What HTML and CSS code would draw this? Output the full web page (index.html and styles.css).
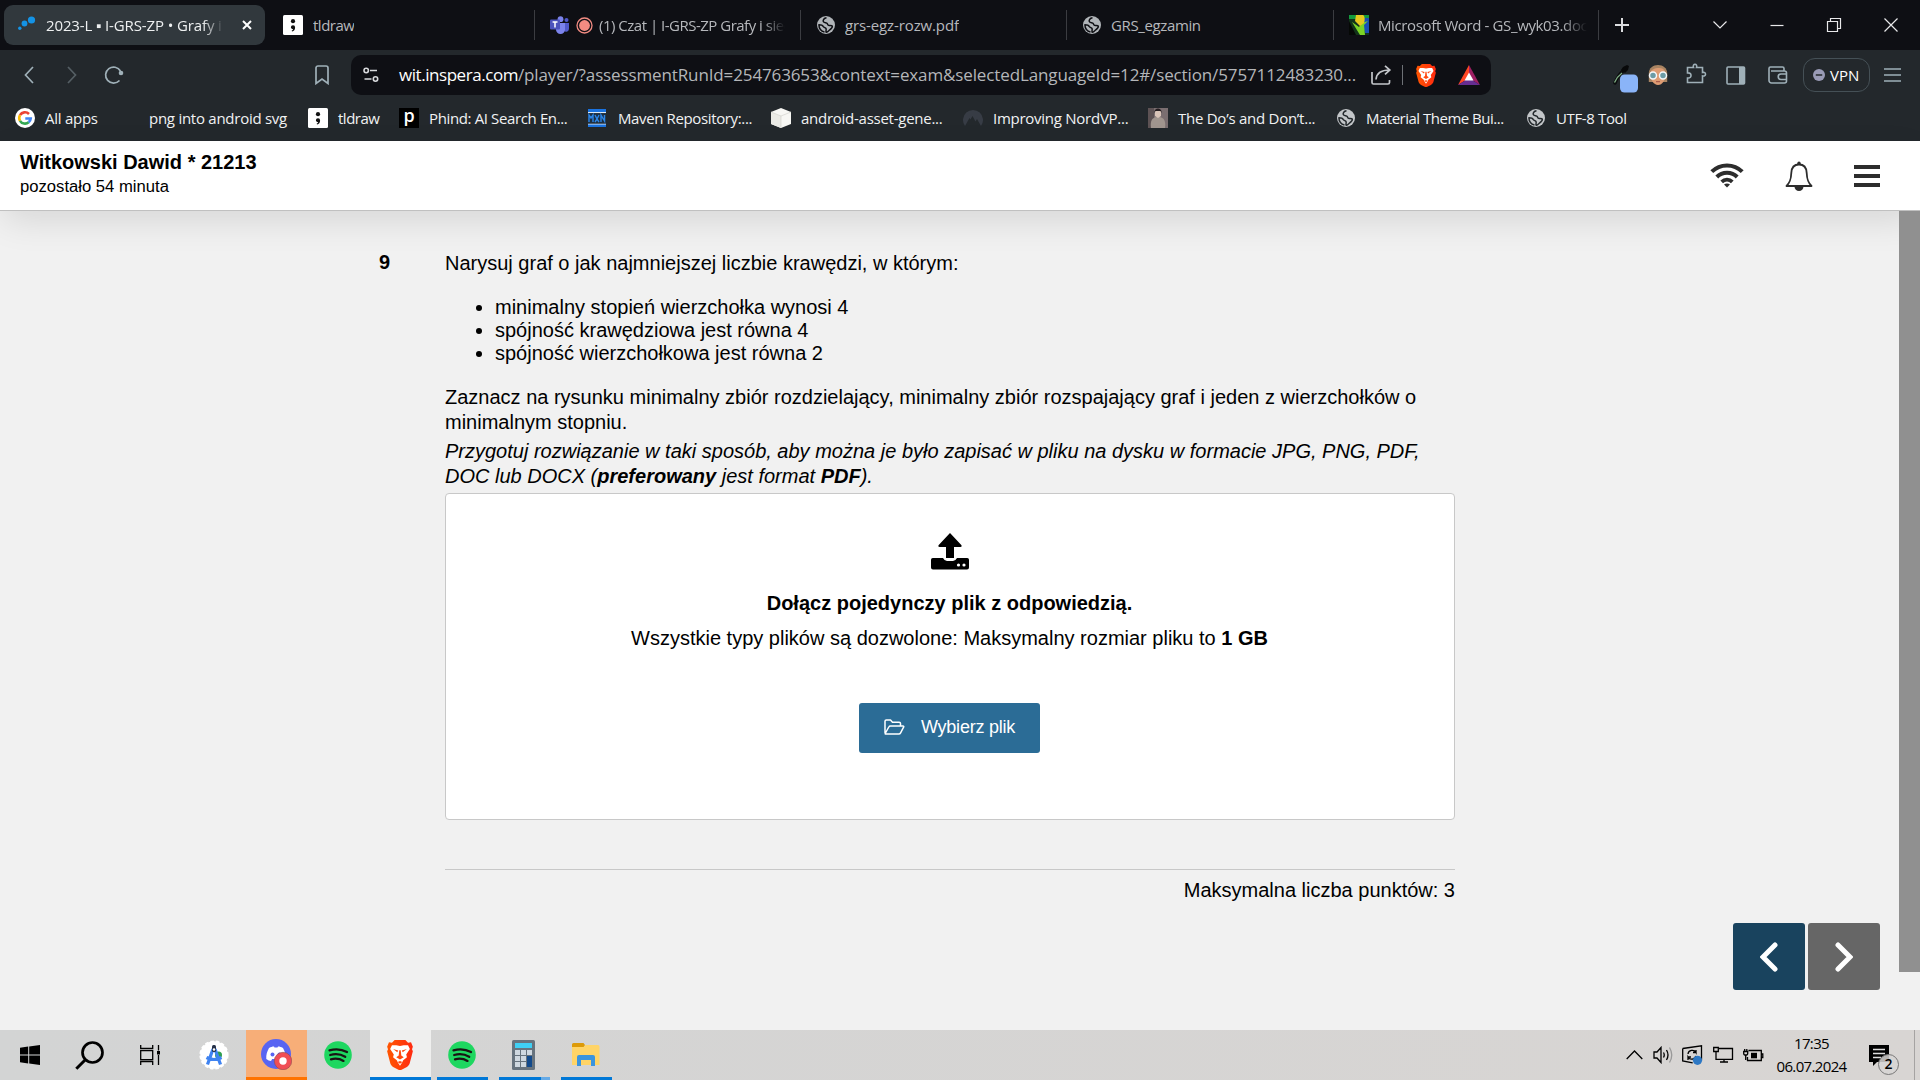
FILE: index.html
```html
<!DOCTYPE html>
<html lang="pl">
<head>
<meta charset="utf-8">
<title>2023-L ▪ I-GRS-ZP • Grafy i sieci</title>
<link rel="stylesheet" href="styles.css">
</head>
<body>
<svg class="defs" width="0" height="0">
  <symbol id="globe" viewBox="0 0 18 18"><circle cx="9" cy="9" r="9" fill="currentColor"/><path d="M9.500 1.800C7 2.200 5.800 4 6.300 5.600c.5 1.400 2.200 1 3.400 1.500 1.100.5.700 1.900 1.900 2.300 1.300.4 3.200-.2 3.700.8.400 1.200-1.300 2.600-2.700 3.800-1.200 1-1.900 2-3.400 2.300-.8-1 .5-2.700-.2-3.800-.6-1-2.200-.9-2.800-2.100C5.700 9.300 4 8.700 1.900 8.700c.1 3.700 2.500 6.500 5.600 7.300" fill="none" stroke="var(--cut)" stroke-width="1.500" stroke-linejoin="round"/></symbol>
  <symbol id="semi" viewBox="0 0 20 20"><rect width="20" height="20" rx="1.500" fill="#fff"/><circle cx="10" cy="6.200" r="2.100" fill="#111"/><path d="M7.900 12.300a2.100 2.100 0 1 1 4.200.1c0 2.200-1.200 3.600-3 4.200l-.5-.9c.9-.4 1.400-.9 1.500-1.600-1.300 0-2.200-.8-2.200-1.800z" fill="#111"/></symbol>
  <symbol id="lion" viewBox="0 0 24 28"><path d="M7 0h10l2.500 2.500 2.800-.3 1.700 4-.8 2.500.8 1.800-3 11.500c-.4 1.500-1.500 2.500-3 3.500l-6 3-6-3c-1.500-1-2.600-2-3-3.500L0 10.500l.8-1.800L0 6.200l1.700-4 2.800.3z" fill="url(#lionfill)"/><path d="M12 5.500 8.500 4.800 4.500 5 2.800 8.500l3.400 5-.7 2.500 3.500 3 1 2L12 24l2-3 1-2 3.500-3-.7-2.500 3.400-5L19.500 5l-4-.2z" fill="#fff"/><path d="m5.500 8.500 4.800 1.200-.8 1.800zM18.500 8.500 13.700 9.700l.8 1.800zM11.300 9.500h1.400l.5 5L15.500 16 12 18.300 8.500 16l2.300-1.500zM9.800 20.500l2.200-.8 2.200.8-2.200 1.600z" fill="#ff4a12"/></symbol>
  <linearGradient id="lionfill"><stop offset="0" stop-color="#ff5601"/><stop offset="1" stop-color="#ff2a10"/></linearGradient>
  <symbol id="spotify" viewBox="0 0 28 28"><circle cx="14" cy="14" r="13.800" fill="#1ed760"/><path d="M5.500 9.300c6-1.600 12.500-1 17.500 1.700M6.200 14c5-1.400 10.700-.8 15 1.800M7 18.300c4.300-1.100 8.800-.6 12.500 1.600" fill="none" stroke="#191414" stroke-linecap="round" stroke-width="2.300"/></symbol>
</svg>

<div class="tabstrip">
  <div class="tab active">
    <svg class="ic" width="18" height="18" viewBox="0 0 18 18" fill="#1493e6"><circle cx="1.800" cy="12.300" r="1.700"/><circle cx="6.500" cy="7.500" r="2.900"/><circle cx="13.500" cy="4" r="3.600"/></svg>
    <span class="t fade ls1">2023-L ▪ I-GRS-ZP • Grafy i sieci</span>
    <svg class="x" width="10" height="10" viewBox="0 0 10 10"><path d="m1 1 8 8M9 1 1 9" stroke="#fff" stroke-width="2"/></svg>
  </div>
  <div class="tab"><svg class="ic" width="20" height="20"><use href="#semi"/></svg><span class="t ls5">tldraw</span></div>
  <div class="tab">
    <svg class="ic" width="20" height="18" viewBox="0 0 20 18"><circle cx="10.500" cy="3.200" r="2.900" fill="#7b83eb"/><circle cx="16.500" cy="4" r="2" fill="#5059c9"/><path d="M13 7h6v5.500a3 3 0 0 1-5 2.500z" fill="#5059c9"/><path d="M6 7h9v6.500a4.500 4.500 0 0 1-9 0z" fill="#7b83eb"/><rect y="3.500" width="10" height="10" rx="1" fill="#4b53bc"/><path d="M2.600 6h4.900M5 6v5.500" stroke="#fff" stroke-width="1.500"/></svg>
    <svg class="rec" width="17" height="17" viewBox="0 0 17 17"><circle cx="8.500" cy="8.500" r="7.500" fill="none" stroke="#f28b82" stroke-width="1.300"/><circle cx="8.500" cy="8.500" r="5.400" fill="#f28b82"/></svg>
    <span class="t fade ls5">(1) Czat | I-GRS-ZP Grafy i sieci</span>
  </div>
  <div class="tab"><svg class="ic g" width="18" height="18"><use href="#globe"/></svg><span class="t ls1">grs-egz-rozw.pdf</span></div>
  <div class="tab"><svg class="ic g" width="18" height="18"><use href="#globe"/></svg><span class="t ls3">GRS_egzamin</span></div>
  <div class="tab">
    <svg class="ic" width="20" height="20" viewBox="0 0 20 20"><rect width="20" height="20" fill="#12331a"/><path d="M0 0h20v4H0z" fill="#149a3d"/><path d="M12 3h8v15h-4z" fill="#1a4fb5"/><path d="M0 6v14h7z" fill="#050805"/><path d="m3 7 8 13h5L15 10l4-4-6 2-3 4z" fill="#7bd326"/><path d="M7 0h7c2 1 2 5 1 8l-4 3-5-5z" fill="#e8c81e"/></svg>
    <span class="t fade ls3">Microsoft Word - GS_wyk03.docx</span>
  </div>
  <svg class="plus" width="14" height="14" viewBox="0 0 14 14"><path d="M7 0v14M0 7h14" stroke="#dcdde0" stroke-width="2"/></svg>
  <div class="wincontrols">
    <svg width="16" height="16" viewBox="0 0 16 16"><path d="m1.500 4.500 6.500 6.500 6.500-6.500"/></svg>
    <svg width="16" height="16" viewBox="0 0 16 16"><path d="M1.500 8.500h13"/></svg>
    <svg width="16" height="16" viewBox="0 0 16 16"><path d="M1.500 4.500h10v10h-10zM4.500 4V1.500h10v10H12"/></svg>
    <svg width="16" height="16" viewBox="0 0 16 16"><path d="m1.500 1.500 13 13M14.500 1.500l-13 13"/></svg>
  </div>
</div>

<div class="toolbar">
  <div class="nav">
    <svg width="10" height="18" viewBox="0 0 10 18"><path d="M9 1 1.500 9 9 17"/></svg>
    <svg class="dim" width="10" height="18" viewBox="0 0 10 18"><path d="m1 1 7.500 8L1 17"/></svg>
    <svg width="20" height="20" viewBox="0 0 20 20"><path d="M15.500 15.500A8 8 0 1 1 16.500 6"/><circle cx="17" cy="8" r="2.300" fill="#9fb0b8" stroke="none"/></svg>
  </div>
  <svg class="bm" width="14" height="20" viewBox="0 0 14 20"><path d="M1 3a2 2 0 0 1 2-2h8a2 2 0 0 1 2 2v15.500l-6-4.500-6 4.500z"/></svg>
  <div class="omnibox">
    <svg width="16" height="16" viewBox="0 0 16 16" fill="none" stroke="#d8dadd" stroke-width="1.600"><circle cx="3.200" cy="3.500" r="2.200"/><path d="M7 3.500h7M1.500 12h7"/><circle cx="12.500" cy="12" r="2.200"/></svg>
    <span class="url"><b>wit.inspera.com</b>/player/?assessmentRunId=254763653&amp;context=exam&amp;selectedLanguageId=12#/section/5757112483230...</span>
    <svg class="share" width="21" height="20" viewBox="0 0 21 20" fill="none" stroke="#c3c6ca" stroke-width="1.700"><path d="M1 7v10.500a1.500 1.500 0 0 0 1.500 1.500H17a1.500 1.500 0 0 0 1.500-1.500V15M5 14.500C5.500 8.500 10 5 18.500 5M14 .8 18.800 5 14 9.300"/></svg>
    <i class="bar"></i>
    <svg class="shield" width="20" height="23"><use href="#lion"/></svg>
    <svg width="22" height="20" viewBox="0 0 22 20"><path d="M11 0 0 20l11-7z" fill="#ff4724"/><path d="m11 0 11 20-11-7z" fill="#9e1f63"/><path d="M0 20h22l-11-7z" fill="#662d91"/><path d="m11 7.500 4.500 8h-9z" fill="#fff"/></svg>
  </div>
  <div class="ext">
    <svg width="26" height="28" viewBox="0 0 26 28"><path d="M2 18C4 13 7 8 13 3" stroke="#0b0d0e" stroke-width="3.500" fill="none" stroke-linecap="round"/><path d="M1.500 17.500C3 14 5 11 9 8" stroke="#7fae85" stroke-width="1.300" fill="none"/><path d="m10 2 4-2 2 1-1 4-3 3-4-3z" fill="#08090a"/><rect x="7" y="9.500" width="18" height="18" rx="4.500" fill="#8ab4f8"/></svg>
    <svg width="20" height="20" viewBox="0 0 20 20"><path d="M.8 17V8C1 3 5 0 10 0s9 3 9.200 8v9z" fill="#a88462"/><path d="M2.500 8c0-3 3.500-5 9-5 4 0 6 3 6 6 0 6-3 11-7.500 11S2.500 15 2.500 8z" fill="#dd9c73"/><circle cx="5" cy="10.500" r="3.500" fill="#6c9ca6" stroke="#f4f8fa" stroke-width="1.500"/><circle cx="15" cy="10.500" r="3.500" fill="#6c9ca6" stroke="#f4f8fa" stroke-width="1.500"/><path d="M8 16.700h4" stroke="#9d4d40"/></svg>
    <svg width="22" height="22" viewBox="0 0 22 22" class="ol"><path d="M2.500 4.500h6c-.8-2 .4-3.200 1.500-3.200s2.300 1.200 1.500 3.200h6v5c2-.6 3 .6 3 1.700s-1 2.300-3 1.700v6.600H2.500v-4.500c3 .2 3.500-1.500 3.500-2.600S5.500 9.700 2.500 9.900z"/></svg>
    <svg width="20" height="19" viewBox="0 0 20 19"><rect x="1" y="1" width="17.500" height="17" rx="1" fill="none" stroke="#9fb0b8" stroke-width="1.600"/><path d="M13 1h5.500v17H13z" fill="#9fb0b8"/></svg>
    <svg width="20" height="18" viewBox="0 0 20 18" class="ol"><path d="M16 5V2.500A1.500 1.500 0 0 0 14.500 1h-12A1.500 1.500 0 0 0 1 2.500v12A2.500 2.500 0 0 0 3.500 17h13a2 2 0 0 0 2-2V7a2 2 0 0 0-2-2H3M18.500 8H13a2.500 2.500 0 0 0 0 5.500h5.500"/></svg>
    <div class="vpn"><svg width="12" height="12" viewBox="0 0 12 12"><circle cx="6" cy="6" r="6" fill="#9a9bb6"/><path d="M2.800 6h6.400" stroke="#23282b" stroke-width="1.500"/></svg>VPN</div>
    <svg width="18" height="14" viewBox="0 0 18 14"><path d="M0 1h17M0 7h17M0 13h17" stroke="#9fb0b8" stroke-width="1.300"/></svg>
  </div>
</div>

<div class="bookmarks">
  <span><svg width="20" height="20" viewBox="0 0 20 20"><circle cx="10" cy="10" r="10" fill="#fff"/><g fill="none" stroke-width="2.600"><path d="M14 6A5.700 5.700 0 0 0 5 7.200" stroke="#ea4335"/><path d="M5 7.200a5.700 5.700 0 0 0 0 5.600" stroke="#fbbc05"/><path d="M5 12.800a5.700 5.700 0 0 0 8.700 1.400" stroke="#34a853"/><path d="M13.700 14.200a5.600 5.600 0 0 0 2-3.700H10.300" stroke="#4285f4"/></g></svg><em class="ls2">All apps</em></span>
  <span><i class="blank"></i><em class="ls2">png into android svg</em></span>
  <span><svg width="20" height="20"><use href="#semi"/></svg><em class="ls5">tldraw</em></span>
  <span><i class="phind">p</i><em class="ls3">Phind: AI Search En...</em></span>
  <span><svg width="18" height="18" viewBox="0 0 18 18"><path d="M0 0h18v3H0zM0 15h18v3H0z" fill="#1a73e0"/><path d="M0 3h18v1.200H0zM0 14.500h18v1H0z" fill="#dfe9f2"/><path d="M0 4.200h18v10.300H0z" fill="#1c2f42"/><path d="M1 13V6l2 3 2-3v7M7 6l2 4 2-4M7 13l2-3 2 3M13 13V6l3.500 6V6" stroke="#2c86e8" stroke-width="1.400" fill="none"/></svg><em class="ls3 mvn2">Maven Repository:...</em></span>
  <span><svg width="20" height="20" viewBox="0 0 20 20"><path d="m10 0 10 4v12l-10 4-10-4V4z" fill="#f7f7f4"/><path d="m0 4 10 4v12L0 16z" fill="#eaeae5"/><path d="m0 4 10 4 10-4M10 8v12" stroke="#d3d3cd" fill="none" stroke-width=".7"/></svg><em class="ls2">android-asset-gene...</em></span>
  <span><svg width="20" height="20" viewBox="0 0 20 20"><path d="M2 18A10 10 0 1 1 18 18l-4-7-1.500 2.500L9.500 8 7.500 11.500 6.500 10z" fill="#373c45"/></svg><em class="ls2">Improving NordVP...</em></span>
  <span><svg width="20" height="20" viewBox="0 0 20 20"><rect width="20" height="20" fill="#7a6e70"/><path d="M0 0h6v20H0z" fill="#5d5254"/><path d="M3 20c-1-7 1-10 5-11h4c4 1 6 4 5 11z" fill="#a0958e"/><path d="M7 3h6v5l-3 2-3-2z" fill="#d9c4b8"/><path d="M6.500 5c-1-6 8-6 7 0l-1-2h-5z" fill="#241d20"/></svg><em class="ls2">The Do’s and Don’t...</em></span>
  <span><svg class="gb" width="18" height="18"><use href="#globe"/></svg><em class="ls5 mvn">Material Theme Bui...</em></span>
  <span><svg class="gb" width="18" height="18"><use href="#globe"/></svg><em class="ls3 mvn">UTF-8 Tool</em></span>
</div>

<header class="exam">
  <div>
    <div class="name">Witkowski Dawid * 21213</div>
    <div class="left">pozostało 54 minuta</div>
  </div>
  <div class="exam-icons">
    <svg width="34" height="26" viewBox="0 0 34 26" fill="none" stroke="#2d2d2d"><path d="M1.800 8.700C10 .3 24 .3 32.200 8.700" stroke-width="4"/><path d="M6.800 14c5.500-5.700 14.900-5.700 20.400 0" stroke-width="4"/><path d="M11.700 18.800c3-2.900 7.600-2.900 10.600 0" stroke-width="3.800"/><path d="m14 21.500 3 3 3-3c-1.800-1.500-4.200-1.500-6 0z" fill="#2d2d2d" stroke="none"/></svg>
    <svg width="28" height="31" viewBox="0 0 28 31"><path d="M14 3.500c-5 0-7.500 3.500-7.700 8.500-.3 7.500-1.800 10-4.800 13h25c-3-3-4.500-5.500-4.800-13-.2-5-2.700-8.500-7.700-8.500z" fill="none" stroke="#2d2d2d" stroke-width="1.800" stroke-linejoin="round"/><circle cx="14" cy="2.200" r="1.700" fill="#2d2d2d"/><path d="M9.500 25.500a4.500 4.500 0 0 0 9 0z" fill="#2d2d2d"/></svg>
    <svg width="26" height="22" viewBox="0 0 26 22"><path d="M0 0h26v4H0zM0 9h26v4H0zM0 18h26v4H0z" fill="#2d2d2d"/></svg>
  </div>
</header>

<main class="page">
  <div class="question">
    <div class="num">9</div>
    <div class="body">
      <p>Narysuj graf o jak najmniejszej liczbie krawędzi, w którym:</p>
      <ul>
        <li>minimalny stopień wierzchołka wynosi 4</li>
        <li>spójność krawędziowa jest równa 4</li>
        <li>spójność wierzchołkowa jest równa 2</li>
      </ul>
      <p>Zaznacz na rysunku minimalny zbiór rozdzielający, minimalny zbiór rozspajający graf i jeden z wierzchołków o minimalnym stopniu.</p>
      <p class="note">Przygotuj rozwiązanie w taki sposób, aby można je było zapisać w pliku na dysku w formacie JPG, PNG, PDF, DOC lub DOCX (<b>preferowany</b> jest format <b>PDF</b>).</p>
      <div class="upload">
        <svg width="38" height="37" viewBox="0 0 38 37"><path d="M19 0 30.500 12.300q.8 1.700-1 1.700H23v11h-8V14H8.500q-1.800 0-1-1.700z"/><path d="M1.800 25H12q1.500 3 4 3h6q2.500 0 4-3h10.200Q38 25 38 26.800v7.700q0 2-2 2H2q-2 0-2-2v-7.700Q0 25 1.800 25z"/><circle cx="27.500" cy="32" r="1.600" fill="#fff"/><circle cx="33" cy="32" r="1.600" fill="#fff"/></svg>
        <h2>Dołącz pojedynczy plik z odpowiedzią.</h2>
        <div class="types">Wszystkie typy plików są dozwolone: Maksymalny rozmiar pliku to <b>1 GB</b></div>
        <div class="btn"><svg width="21" height="16" viewBox="0 0 21 16" fill="none" stroke="#fff" stroke-width="1.500" stroke-linejoin="round"><path d="M1 14V2.300Q1 1 2.300 1h4.200l2 2.300h6.700q1.300 0 1.300 1.300V7M1.200 14.500 4.800 8q.5-1 1.600-1h12.500q1.300 0 .7 1.200l-3 5.600q-.6 1.200-1.800 1.200H1.800q-.8 0-.6-.5z"/></svg>Wybierz plik</div>
      </div>
      <div class="points">Maksymalna liczba punktów: 3</div>
    </div>
  </div>
  <div class="pager">
    <div class="prev"><svg width="18" height="30" viewBox="0 0 18 30"><path d="M15 3 3 15l12 12"/></svg></div>
    <div class="next"><svg width="18" height="30" viewBox="0 0 18 30"><path d="m3 3 12 12L3 27"/></svg></div>
  </div>
  <div class="scroll"></div>
</main>

<footer class="taskbar">
  <div class="cell w1"><svg width="20" height="20" viewBox="0 0 20 20"><path d="m0 2.800 8.200-1.200v8H0zM9.200 1.500 20 0v9.600H9.200zM0 10.600h8.200v7.900L0 17.300zM9.200 10.600H20V20L9.200 18.600z"/></svg></div>
  <div class="cell w2"><svg width="29" height="29" viewBox="0 0 29 29"><circle cx="17.500" cy="11.500" r="10" fill="none" stroke="#000" stroke-width="2.700"/><path d="m10.300 18.700-9 9" stroke="#000" stroke-width="3"/></svg></div>
  <div class="cell w3"><svg width="21" height="20" viewBox="0 0 21 20" fill="none" stroke="#000" stroke-width="1.300"><path d="M.7 0v3.500h12V0M.7 5.600h12v9H.7zM.7 20v-3.500h12V20M18.500 0v5.500M18.500 10v10"/><path d="M17 6h3v3.500h-3z" fill="#000" stroke="none"/></svg></div>
  <div class="cell w4"><svg width="30" height="30" viewBox="0 0 30 30"><circle cx="15" cy="15" r="13.700" fill="#fff"/><circle cx="15" cy="15" r="13.700" fill="none" stroke="#fff" stroke-width="1.800" stroke-dasharray="3.500 2"/><circle cx="19.500" cy="15" r="3.500" fill="#2f9e4f"/><path d="m14 9-5.500 15.500M16 9l5.500 15.500M7.500 17.500q7.500 4 15 0" stroke="#3f83f1" stroke-width="3.200" fill="none"/><rect x="13" y="5" width="4" height="7" rx="1.500" fill="#26324a"/><circle cx="15" cy="9.500" r="1.300" fill="#fff"/></svg></div>
  <div class="cell discord"><svg width="31" height="31" viewBox="0 0 31 31"><circle cx="15" cy="15" r="15" fill="#5865f2"/><path d="M8 9c2-1 3-1.500 5-1.500l.5 1h3l.5-1c2 0 3 .5 5 1.500 2 3.500 3 7 2.700 11-1.700 1.300-3.200 2-4.700 2l-1.200-2h-7.600L10 22c-1.500 0-3-.7-4.700-2C5 16 6 12.500 8 9z" fill="#fff"/><circle cx="11.500" cy="15.500" r="2" fill="#5865f2"/><circle cx="18.500" cy="15.500" r="2" fill="#5865f2"/><circle cx="22" cy="22" r="8.700" fill="#f04e55" stroke="#8f4a4d" stroke-width=".6"/><circle cx="22" cy="22" r="3.700" fill="#fff"/></svg></div>
  <div class="cell w6"><svg width="28" height="28"><use href="#spotify"/></svg></div>
  <div class="cell brave"><svg width="26" height="30"><use href="#lion"/></svg></div>
  <div class="cell run"><svg width="28" height="28"><use href="#spotify"/></svg></div>
  <div class="cell run multi"><svg width="23" height="30" viewBox="0 0 23 30"><rect width="23" height="30" rx="1.500" fill="#67737e"/><path d="M3 3h17v5H3z" fill="#3fd0f5"/><path d="M3 10h5v5H3zM9 10h5v5H9zM15 10h5v5h-5zM3 16h5v5H3zM9 16h5v5H9zM3 22h5v5H3zM9 22h5v5H9z" fill="#cfd8e0"/><path d="M15 16h5v11h-5z" fill="#124a8c"/></svg></div>
  <div class="cell run"><svg width="28" height="24" viewBox="0 0 28 24"><path d="M0 1.500Q0 0 1.500 0h10l1.500 2-1.500 3H0z" fill="#dd9a08"/><path d="M0 4h11.500l2-2H26q1.500 0 1.500 1.500V22H0z" fill="#ffd467"/><path d="M5 23V14q0-2 2-2h14q2 0 2 2v9h-4v-6H9v6z" fill="#3b94dd"/></svg></div>
  <div class="tray">
    <svg width="17" height="10" viewBox="0 0 17 10"><path d="m.7 9 7.800-8 7.800 8"/></svg>
    <svg width="20" height="18" viewBox="0 0 20 18"><path d="M1 6h3l4-4.500v15L4 12H1zM10.500 6.500q1.500 2.500 0 5M13.500 4q3 5 0 10"/><path d="M16.500 1.500q4.500 7.500 0 15" class="mute"/></svg>
    <svg width="21" height="20" viewBox="0 0 21 20"><path d="M.7 3.500 19.500.8v14M.7 3.500V16l10 1.800M6 9c.5-4 6-5 8-1.500V5M14 11c-1 3.500-6 4.500-8 1v3M14 7.500h-3M6 12h3"/><circle cx="15.500" cy="15.300" r="4.600" fill="#2d78c4" stroke="none"/></svg>
    <svg width="21" height="18" viewBox="0 0 21 18"><path d="M6 2.500h13.500v10.800H3V7M7 16h8M11 13.500V16M.7 1.500h4.600v4H.7zM3 6v3"/></svg>
    <svg width="21" height="14" viewBox="0 0 21 14"><path d="M5.500 2.500h12.800v10H4.500V9M18.500 6h1.300v3.500h-1.300M.7 3.500v2Q.7 7 2.700 7t2-1.500v-2zM1.700 1v2M3.800 1v2M2.700 7.500V12"/><path d="M8 4.800h6v5.500H8z" class="full"/></svg>
    <div class="clock"><span>17:35</span><span class="date">06.07.2024</span></div>
    <div class="notif"><svg width="20" height="21" viewBox="0 0 20 21"><path d="M0 0h20v17H8l-4 4v-4H0z" class="full"/><path d="M4 4.500h12M4 8.500h12M4 12.500h8" class="lines"/></svg><i>2</i></div>
  </div>
</footer>
</body>
</html>
```
FILE: styles.css
```css
* { box-sizing: border-box; }
body { margin: 0; width: 1920px; height: 1080px; overflow: hidden; display: flex; flex-direction: column; background: #f1f1f1; font-family: "Liberation Sans", Arial, sans-serif; color: #000; }
svg { flex: none; display: block; }
.defs { position: absolute; }
.ls1 { letter-spacing: -.12px; }
.ls2 { letter-spacing: -.26px; }
.ls3 { letter-spacing: -.37px; }
.ls5 { letter-spacing: -.5px; }

/* tab strip */
.tabstrip { height: 50px; flex: none; background: #0e0f14; padding: 5px 0 5px 4px; display: grid; grid-template-columns: 261px 4px 266px 266px 266px 267px 265px 24px auto; align-items: center; font: 15px/20px "Open Sans", sans-serif; color: #b6b8bc; --cut: #0e0f14; }
.tab { height: 40px; display: flex; align-items: center; padding-left: 15px; min-width: 0; position: relative; }
.tab:nth-child(2) { grid-column: 3; padding-left: 14px; }
.tab + .tab::after { content: ""; position: absolute; right: 0; top: 5px; width: 1px; height: 30px; background: #3b3c41; }
.tab.active { background: #31383d; border-radius: 9px; padding: 0 13px 0 14px; color: #eef0f1; }
.tab .t { white-space: nowrap; margin-left: 9px; padding-bottom: 1px; overflow: hidden; }
.tab .g + .t { margin-left: 10px; }
.tab:nth-child(2) .t { margin-left: 10px; }
.tab .g { color: #b0b4b8; margin-left: 1px; }
.tab.active .t { width: 178px; margin-left: 10px; }
.x { margin-left: auto; }
.rec { margin-left: 6px; }
.tab .rec + .t { margin-left: 6px; width: 186px; }
.tab:nth-child(6) .t { width: 209px; }
.fade { -webkit-mask-image: linear-gradient(90deg, #000 88%, transparent); mask-image: linear-gradient(90deg, #000 88%, transparent); }
.plus { margin-left: 16px; }
.wincontrols { justify-self: end; display: flex; gap: 41px; padding-right: 21px; }
.wincontrols path { fill: none; stroke: #e8e8ea; stroke-width: 1.200; }

/* toolbar */
.toolbar { height: 50px; flex: none; background: #23282c; display: flex; align-items: center; }
.nav { display: flex; align-items: center; gap: 33px; padding-left: 24px; width: 315px; }
.nav svg:nth-child(3) { margin-left: -6px; }
.nav path, .bm path { fill: none; stroke: #9fb0b8; stroke-width: 1.700; }
.nav .dim { opacity: .4; }
.omnibox { margin-left: 22px; width: 1140px; height: 40px; border-radius: 10px; background: #0e0f14; display: flex; align-items: center; padding-left: 12px; }
.url { margin-left: 20px; width: 972px; white-space: nowrap; font: 17px/24px "Open Sans", sans-serif; letter-spacing: -.125px; color: #b4b6b9; }
.url b { font-weight: 400; letter-spacing: -.45px; color: #fff; }
.bar { width: 1px; height: 20px; background: #6d7176; margin: 0 13px 0 10px; }
.shield { margin-right: 22px; }
.ext { margin-left: auto; display: flex; align-items: center; padding-right: 18px; }
.ext > svg:nth-child(1) { margin-right: 9px; margin-top: 8px; }
.ext > svg:nth-child(2) { margin-right: 17px; }
.ext > svg:nth-child(3) { margin-right: 19px; margin-top: -3px; }
.ext > svg:nth-child(4) { margin-right: 22px; }
.ext > svg:nth-child(5) { margin-right: 15px; }
.ol path { fill: none; stroke: #9fb0b8; stroke-width: 1.600; }
.vpn { width: 67px; height: 34px; border: 1px solid #455056; border-radius: 12px; display: flex; align-items: center; gap: 5px; padding-left: 9px; margin-right: 14px; color: #fff; font: 15px/20px "Open Sans", sans-serif; }

/* bookmarks */
.bookmarks { height: 41px; flex: none; background: #23282c; display: grid; grid-template-columns: 104px 189px 91px 189px 183px 192px 185px 189px 190px 200px; padding: 0 0 5px 15px; font: 15px/20px "Open Sans", sans-serif; color: #f1f2f3; --cut: #23282c; }
.bookmarks span { display: flex; align-items: center; gap: 10px; white-space: nowrap; }
.bookmarks em { font-style: normal; padding-bottom: 1px; }
.bookmarks .mvn { margin-left: 1px; }
.bookmarks .mvn2 { margin-left: 2px; }
.blank { width: 20px; }
.phind { width: 20px; height: 20px; background: #000; color: #fff; font: 600 18px/15px "Open Sans", sans-serif; text-align: center; }
.gb { color: #c3c6c9; }

/* exam header */
.exam { height: 70px; flex: none; background: #fff; border-bottom: 1px solid #c0c0c0; box-shadow: 0 12px 36px -4px rgba(0, 0, 0, .12); display: flex; justify-content: space-between; padding: 9px 40px 0 20px; position: relative; z-index: 1; }
.name { font-size: 20px; line-height: 25px; font-weight: 700; }
.left { font-size: 16.650px; line-height: 22px; margin-top: 1px; }
.exam-icons { display: flex; align-items: center; gap: 41px; height: 52px; }

/* question */
.page { flex: 1; position: relative; padding: 39px 0 0 379px; font-size: 20px; line-height: 25px; }
.question { display: grid; grid-template-columns: 66px 1010px; }
.num { font-weight: 700; }
.body { padding-top: 1px; }
p { margin: 0; }
ul { margin: 20px 0; padding-left: 50px; line-height: 23px; }
.note { margin-top: 4px; font-style: italic; }
.upload { margin-top: 4px; height: 327px; background: #fff; border: 1px solid #c8c8c8; border-radius: 4px; display: flex; flex-direction: column; align-items: center; padding: 39px 1px 0 0; }
.upload h2 { font-size: 20px; margin: 21px 0 0; }
.types { margin-top: 10px; }
.btn { margin-top: 52px; width: 181px; height: 50px; background: #2b6c96; border-radius: 3px; color: #fff; display: flex; align-items: center; gap: 16px; padding: 0 0 2px 25px; font-size: 18px; letter-spacing: -.24px; }
.points { margin-top: 49px; border-top: 1px solid #c8c8c8; padding-top: 8px; text-align: right; }
.pager { position: absolute; left: 1733px; top: 712px; display: flex; gap: 3px; }
.pager div { width: 72px; height: 67px; border-radius: 3px; display: grid; place-items: center; }
.prev { background: #19435e; }
.next { background: #666; }
.pager path { fill: none; stroke: #fff; stroke-width: 5; stroke-linecap: round; }
.scroll { position: absolute; z-index: 2; right: 0; top: 0; width: 21px; height: 761px; background: #909090; }

/* taskbar */
.taskbar { height: 50px; flex: none; background: linear-gradient(90deg, #d3d4d4, #d8d5d3); display: flex; }
.cell { display: grid; place-items: center; height: 50px; }
.w1 { width: 60px; }
.w2 { width: 60px; padding-right: 1px; }
.w3 { width: 61px; }
.w4 { width: 65px; }
.discord { width: 61px; background: #f7ae78; border-bottom: 3px solid #ff7300; }
.w6 { width: 63px; padding-right: 2px; }
.brave { width: 61px; background: #efefee; border-bottom: 3px solid #0078d7; padding-right: 2px; }
.run { width: 51px; margin-left: 6px; border-bottom: 3px solid #0078d7; padding-right: 2px; }
.run + .run { margin-left: 11px; }
.multi { border-image: linear-gradient(90deg, #0078d7 81%, #66aae6 81%) 1; border-width: 0 0 3px; }
.discord svg, .brave svg, .run svg { margin-top: 2px; }
.tray { margin-left: auto; display: flex; align-items: center; gap: 9.500px; padding-right: 5px; }
.tray path { fill: none; stroke: #000; stroke-width: 1.300; }
.tray path.full { fill: #000; stroke: none; }
.tray path.mute { stroke: #999; }
.tray path.lines { stroke: #ddd; }
.clock { width: 76px; display: flex; flex-direction: column; align-items: center; font: 15px/23px "Open Sans", sans-serif; letter-spacing: -.65px; }
.notif { position: relative; width: 46px; height: 50px; border-right: 1px solid #a5a3a2; padding: 15px 0 0; margin-left: 10px; }
.notif i { position: absolute; left: 9px; top: 24px; width: 21px; height: 21px; border-radius: 50%; border: 1.500px solid #777; background: rgba(215, 213, 212, .85); font: 600 14px/18px "Open Sans", sans-serif; text-align: center; }
```
